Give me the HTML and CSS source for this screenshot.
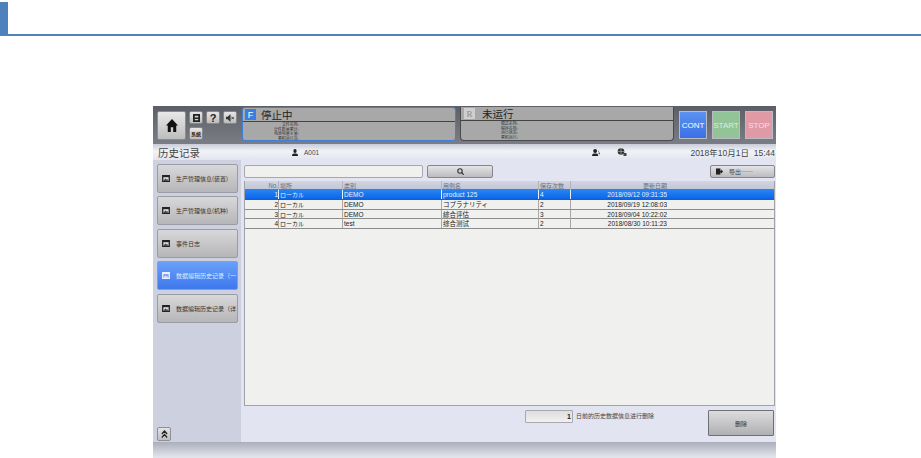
FILE: index.html
```
<!DOCTYPE html>
<html lang="zh">
<head>
<meta charset="utf-8">
<title>历史记录</title>
<link rel="stylesheet" href="styles.css">
</head>
<body>
<div class="page-head"><div class="page-mark"></div></div>
<div class="app">
  <header class="topbar">
    <button class="home" aria-label="home"><svg width="12" height="13" viewBox="0 0 15 14" preserveAspectRatio="none"><path d="M7.500 0 15 7h-2.200v7H9V9H6v5H2.200V7H0z" fill="#111"/></svg></button>
    <div class="tools">
      <button class="tool"><svg width="7" height="8" viewBox="0 0 8 9" preserveAspectRatio="none"><path d="M0 0h8v9H0z" fill="#222"/><path d="M2 2h4v2H2zM2 5.500h4V7H2z" fill="#ccc"/></svg></button>
      <button class="tool tool-q">?</button>
      <button class="tool"><svg width="8" height="8" viewBox="0 0 9 9"><path d="M0 3h2l3-3v9L2 6H0z" fill="#333"/><path d="m6 3 3 3M9 3 6 6" stroke="#333"/></svg></button>
      <button class="tool tool-txt">系统</button>
    </div>
    <section class="status status-f">
      <div class="status-title"><span class="badge badge-f">F</span><span>停止中</span></div>
      <div class="status-info"><span>文件名称:</span><span>计件数量累计:</span><span>电池电量余量:</span><span>累积运行次:</span></div>
    </section>
    <section class="status status-r">
      <div class="status-title"><span class="badge badge-r">R</span><span>未运行</span></div>
      <div class="status-info"><span>模式名称:</span><span>程序名称:</span><span>运行状态:</span><span>累积运行:</span></div>
    </section>
    <div class="actions">
      <button class="act act-cont">CONT</button>
      <button class="act act-start">START</button>
      <button class="act act-stop">STOP</button>
    </div>
  </header>
  <div class="titlebar">
    <h1>历史记录</h1>
    <div class="user"><svg width="6" height="7" viewBox="0 0 8 8" preserveAspectRatio="none"><circle cx="4" cy="2.300" r="2.200" fill="#222"/><path d="M0 8c0-3 2-3 4-3s4 0 4 3z" fill="#222"/></svg><span>A001</span></div>
    <svg class="ic-people" width="8" height="7" viewBox="0 0 9 8"><circle cx="3.500" cy="2.300" r="2.200" fill="#222"/><path d="M0 8c0-3 1.500-3 3.500-3S7 5 7 8z" fill="#222"/><path d="M7 2h1v1H7zM7.500 4H9v2H7.500z" fill="#555"/></svg>
    <svg class="ic-net" width="10" height="8" viewBox="0 0 9 8"><circle cx="3.500" cy="3.500" r="3.300" fill="#333"/><path d="M0 3.500h7M3.500 0v7" stroke="#bbb" stroke-width=".6"/><path d="M6 5h3v3H6z" fill="#444"/></svg>
    <time>2018年10月1日&nbsp; 15:44</time>
  </div>
  <div class="body">
    <nav class="side">
      <button class="nav"><svg class="nav-ic" viewBox="0 0 9 8"><path d="M0 0h9v8H0z" fill="#222"/><path d="M1.500 2.500h6v4h-6z" fill="#ddd"/><path d="m2 6 2-2 1.500 1.500L6.500 4.500v2H2z" fill="#333"/></svg><span>生产管理信息(装置)</span></button>
      <button class="nav"><svg class="nav-ic" viewBox="0 0 9 8"><path d="M0 0h9v8H0z" fill="#222"/><path d="M1.500 2.500h6v4h-6z" fill="#ddd"/><path d="m2 6 2-2 1.500 1.500L6.500 4.500v2H2z" fill="#333"/></svg><span>生产管理信息(机种)</span></button>
      <button class="nav"><svg class="nav-ic" viewBox="0 0 9 8"><path d="M0 0h9v8H0z" fill="#222"/><path d="M1.500 2.500h6v4h-6z" fill="#ddd"/><path d="m2 6 2-2 1.500 1.500L6.500 4.500v2H2z" fill="#333"/></svg><span>事件日志</span></button>
      <button class="nav nav-on"><svg class="nav-ic" viewBox="0 0 9 8"><path d="M0 0h9v8H0z" fill="#eef"/><path d="M1.500 2.500h6v4h-6z" fill="#6f9cf7"/><path d="m2 6 2-2 1.500 1.500L6.500 4.500v2H2z" fill="#eef"/></svg><span>数据编辑历史记录（一</span></button>
      <button class="nav"><svg class="nav-ic" viewBox="0 0 9 8"><path d="M0 0h9v8H0z" fill="#222"/><path d="M1.500 2.500h6v4h-6z" fill="#ddd"/><path d="m2 6 2-2 1.500 1.500L6.500 4.500v2H2z" fill="#333"/></svg><span>数据编辑历史记录（详</span></button>
      <button class="up" aria-label="up"><svg width="7" height="8" viewBox="0 0 8 8" preserveAspectRatio="none"><path d="M1 4 4 1l3 3M1 7.500l3-3 3 3" fill="none" stroke="#222" stroke-width="1.500"/></svg></button>
    </nav>
    <main class="main">
      <div class="search-row">
        <div class="search-input"></div>
        <button class="search-btn" aria-label="search"><svg width="7" height="7" viewBox="0 0 7 7"><circle cx="3" cy="3" r="2.200" fill="none" stroke="#333" stroke-width="1.100"/><path d="m4.500 4.500 2.200 2.200" stroke="#333" stroke-width="1.200"/></svg></button>
        <button class="export"><svg width="7" height="7" viewBox="0 0 8 7"><path d="M0 0h5v7H0z" fill="#222"/><path d="M4 2.500h2V1l2 2.500L6 6V4.500H4z" fill="#222"/></svg><span>导出……</span></button>
      </div>
      <div class="table">
        <div class="row row-head"><span class="c-no">No.</span><span class="c-place">場所</span><span class="c-type">类別</span><span class="c-name">用例名</span><span class="c-count">保存次数</span><span class="c-date">更新日期</span></div>
        <div class="row row-sel"><span class="c-no">1</span><span class="c-place">ローカル</span><span class="c-type">DEMO</span><span class="c-name">product 125</span><span class="c-count">4</span><span class="c-date">2018/09/12 09:31:35</span></div>
        <div class="row"><span class="c-no">2</span><span class="c-place">ローカル</span><span class="c-type">DEMO</span><span class="c-name">コプラナリティ</span><span class="c-count">2</span><span class="c-date">2018/09/19 12:08:03</span></div>
        <div class="row"><span class="c-no">3</span><span class="c-place">ローカル</span><span class="c-type">DEMO</span><span class="c-name">綜合评估</span><span class="c-count">3</span><span class="c-date">2018/09/04 10:22:02</span></div>
        <div class="row"><span class="c-no">4</span><span class="c-place">ローカル</span><span class="c-type">test</span><span class="c-name">综合测试</span><span class="c-count">2</span><span class="c-date">2018/08/30 10:11:23</span></div>
      </div>
      <div class="foot-row">
        <div class="days">1</div>
        <span class="foot-text">日前的历史数据信息进行删除</span>
        <button class="delete">删除</button>
      </div>
    </main>
  </div>
  <div class="appfoot"></div>
</div>
</body>
</html>
```

FILE: styles.css
```
* { box-sizing: border-box; }
html, body { margin: 0; padding: 0; }
body {
  width: 921px;
  height: 458px;
  overflow: hidden;
  background: #fff;
  font-family: "Noto Sans CJK SC", "Liberation Sans", sans-serif;
  color: #333;
}
button { font-family: inherit; padding: 0; margin: 0; cursor: pointer; }

.page-head {
  margin-top: 2px;
  height: 34px;
  border-bottom: 2px solid #4f81bd;
}
.page-mark { width: 8px; height: 32px; background: #4f81bd; }

.app {
  width: 623px;
  height: 352px;
  margin: 70px 0 0 153px;
  display: flex;
  flex-direction: column;
}

.topbar {
  height: 38px;
  flex: none;
  display: flex;
  align-items: flex-start;
  background: linear-gradient(#5d5f66, #7b7d86);
}
.home {
  width: 29px;
  height: 29px;
  margin: 5px 0 0 4px;
  flex: none;
  display: flex;
  align-items: center;
  justify-content: center;
  background: linear-gradient(#e8e8e8, #bdbdbd);
  border: 1px solid #8c8c8c;
  border-radius: 2px;
}
.tools {
  width: 53px;
  margin: 5px 0 0 3px;
  flex: none;
  display: grid;
  grid-template-columns: repeat(3, 14px);
  grid-auto-rows: 13px;
  gap: 3px;
}
.tool {
  display: flex;
  align-items: center;
  justify-content: center;
  background: linear-gradient(#e6e6e6, #bcbcbc);
  border: 1px solid #888;
  border-radius: 2px;
  font-size: 6px;
  color: #222;
}
.tool-q { font: bold 11px "Liberation Sans", sans-serif; }
.tool-txt { font-size: 5px; font-weight: 700; }

.status {
  height: 34px;
  margin-top: 1px;
  flex: none;
  background: #a8a8a8;
  border: 1px solid #4a4a4a;
  border-top: 0;
  border-radius: 0 0 4px 4px;
  display: flex;
  flex-direction: column;
}
.status-f { width: 214px; border: 1px solid #3f7fd6; border-radius: 3px; }
.status-r { width: 214px; margin-left: 4px; }
.status-title {
  height: 14px;
  flex: none;
  display: flex;
  align-items: center;
  gap: 5px;
  padding-left: 2px;
  font-size: 10.500px;
  line-height: 14px;
  color: #222;
  border-bottom: 1px solid #444;
}
.status-r .status-title { gap: 7px; padding-left: 3px; }
.badge {
  width: 11px;
  height: 11px;
  display: flex;
  align-items: center;
  justify-content: center;
  font: 9px "Liberation Sans", sans-serif;
}
.badge-f { background: #3a7fe0; color: #fff; }
.badge-r { background: #cfcfcf; color: #8c8c8c; font-family: "Liberation Serif", serif; }
.status-info {
  width: 56px;
  display: flex;
  flex-direction: column;
  align-items: flex-end;
  font-size: 4px;
  line-height: 4.700px;
  color: #333;
}
.status-r .status-info { width: 57px; }

.actions {
  margin: 5px 0 0 5px;
  display: flex;
  gap: 5px;
}
.act {
  width: 28px;
  height: 28px;
  border: 1px solid #b9bcc4;
  color: #eef;
  font: 8px "Liberation Sans", sans-serif;
}
.act-cont { background: linear-gradient(#5c92f0, #3a70e6); color: #fff; }
.act-start { background: #93c498; color: #dcecdc; }
.act-stop { background: #e09aa6; color: #f4dfe3; }

.titlebar {
  height: 16px;
  flex: none;
  display: flex;
  align-items: center;
  background: linear-gradient(#c9ccd8, #f2f3f8 45%, #e2e4ee);
  padding-left: 5px;
}
.titlebar h1 {
  margin: 0;
  width: 134px;
  font-size: 10.500px;
  font-weight: 400;
  color: #444;
}
.user {
  width: 300px;
  display: flex;
  align-items: center;
  gap: 6px;
  font: 6.500px "Liberation Sans", sans-serif;
  color: #444;
}
.ic-net { margin-left: 17px; }
.titlebar time {
  margin-left: auto;
  padding-right: 1px;
  font: 8.500px "Liberation Sans", "Noto Sans CJK SC", sans-serif;
  color: #444;
}

.body { flex: 1; display: flex; min-height: 0; }

.side {
  width: 88px;
  flex: none;
  background: #cdd0de;
  padding: 3.500px 3px 1px 4px;
  display: flex;
  flex-direction: column;
  gap: 3.500px;
}
.nav {
  height: 29px;
  flex: none;
  display: flex;
  align-items: center;
  gap: 6px;
  padding-left: 4px;
  white-space: nowrap;
  background: linear-gradient(#d8d8da, #b6b6b8);
  border: 1px solid #9a9ca4;
  border-radius: 2px;
  color: #333;
  font-size: 6px;
}
.nav-on {
  background: linear-gradient(#69a0f8, #3e78ee);
  color: #dfe9ff;
  border-color: #7b9fe0;
}
.nav-ic { width: 8px; height: 7px; flex: none; }
.up {
  width: 14px;
  height: 14px;
  margin-top: auto;
  display: flex;
  align-items: center;
  justify-content: center;
  background: linear-gradient(#e2e2e2, #c0c0c0);
  border: 1px solid #8f8f94;
  border-radius: 2px;
}

.main {
  flex: 1;
  min-width: 0;
  background: #e2e5f1;
  padding: 5px 1px 0 3px;
  display: flex;
  flex-direction: column;
}
.search-row { height: 13px; flex: none; display: flex; }
.search-input {
  width: 179px;
  background: #f0f0ee;
  border: 1px solid #a6a8ae;
  border-radius: 2px;
}
.search-btn {
  width: 66px;
  margin-left: 4px;
  display: flex;
  align-items: center;
  justify-content: center;
  background: linear-gradient(#e4e4e6, #bcbcbe);
  border: 1px solid #85878c;
  border-radius: 2px;
}
.export {
  width: 65px;
  margin-left: auto;
  display: flex;
  align-items: center;
  gap: 6px;
  padding-left: 5px;
  background: linear-gradient(#e4e4e6, #bcbcbe);
  border: 1px solid #85878c;
  border-radius: 2px;
  color: #444;
  font-size: 6px;
}

.table {
  height: 225px;
  margin-top: 3px;
  flex: none;
  background: #f0f0ee;
  border: 1px solid #a0a2a8;
  border-top: 0;
  font-size: 6px;
  color: #222;
}
.row {
  height: 9.700px;
  display: grid;
  grid-template-columns: 33px 64px 99px 97px 32px 97px 1fr;
  align-items: center;
  line-height: 9px;
  white-space: nowrap;
  border-bottom: 1px solid #8c8c8c;
}
.row > span { padding: 0 0 0 1px; overflow: hidden; }
.row > span + span { border-left: 1px solid #a8a8a8; }
.row-head {
  height: 8px;
  background: linear-gradient(#d2d5e2, #c2c6d6);
  border-bottom: 0;
  color: #6c6e78;
}
.row-head > span + span { border-left-color: #b0b3c2; }
.row-sel {
  height: 11px;
  background: linear-gradient(#2a86f4, #0a66e8);
  color: #e8f0ff;
  border-bottom-color: #555;
}
.row-sel > span + span { border-left-color: #e8f0ff; }
.c-no { text-align: right; }
.c-date { text-align: right; }
.c-type, .c-name, .c-no, .c-count, .c-date {
  font-family: "Liberation Sans", "Noto Sans CJK SC", sans-serif;
  font-size: 6.500px;
}
.row-head span { font-family: "Noto Sans CJK SC", "Liberation Sans", sans-serif; font-size: 6px; }

.foot-row { flex: 1; display: flex; align-items: flex-start; padding: 3px 0 0 281px; }
.days {
  width: 48px;
  height: 13px;
  margin-top: 1px;
  background: linear-gradient(#dedede, #f0f0f0);
  border: 1px solid #a6a8ae;
  border-radius: 1px;
  text-align: right;
  padding-right: 1px;
  font: bold 7px/12px "Liberation Sans", sans-serif;
  color: #222;
}
.foot-text { margin: 1px 0 0 3px; font-size: 6px; line-height: 12px; color: #444; }
.delete {
  width: 66px;
  height: 26px;
  margin: 1px 1px 0 auto;
  background: linear-gradient(#dcdcde, #b0b0b2);
  border: 1px solid #6e7076;
  border-radius: 1px;
  font-size: 6px;
  color: #333;
}
.appfoot {
  height: 16px;
  flex: none;
  background: linear-gradient(#abaebb, #e6e7ee);
}
```
